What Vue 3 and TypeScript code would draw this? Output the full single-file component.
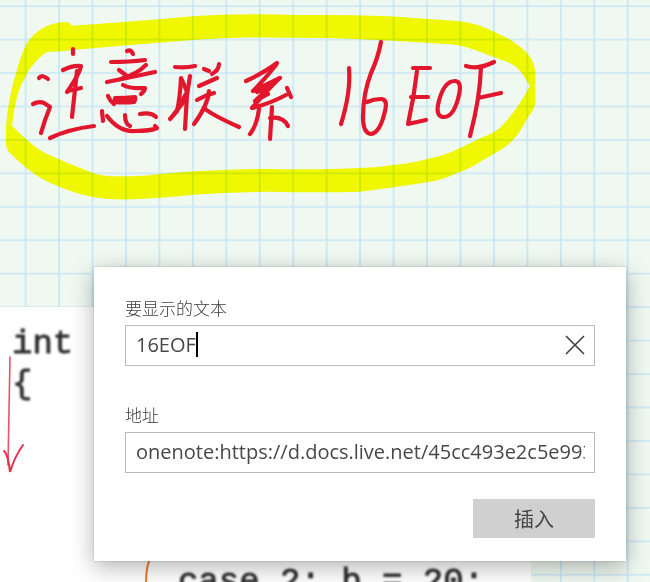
<script setup lang="ts">
import { ref } from 'vue'

const displayText = ref('16EOF')
const address = ref('onenote:https://d.docs.live.net/45cc493e2c5e993')

const openingCode = 'int\n{'
const caseCode = 'case 2: b = 20:'

// Pen strokes of the handwritten heading, grouped by character
const strokes: Record<string, string[]> = {
  zhu: [
    'M39 78Q42 74 48 79',
    'M33 104Q39 101 44 103Q47 105 50 107Q45 119 41 133',
    'M73 49V54',
    'M63 70Q73 65 81 66Q80 73 67 92',
    'M68 91L81 88',
    'M77 71L72 117',
    'M50 138Q69 129 94 126'
  ],
  yi: [
    'M127 51Q131 49 133 54',
    'M111 62Q130 62 145 60',
    'M119 70L127 76',
    'M146 65Q137 74 121 79',
    'M107 82Q132 77 155 72',
    'M123 85Q130 89 145 88Q145 91 141 94',
    'M108 96Q110 101 114 104',
    'M102 111L103 121',
    'M107 116Q119 132 135 131Q151 131 157 128L155 126',
    'M125 115Q125 124 130 126',
    'M140 114Q151 112 156 117'
  ],
  lian: [
    'M175 67Q186 68 195 66',
    'M181 78Q180 98 177 111L170 119',
    'M190 76L187 95L185 129',
    'M182 80L187 92L182 101L186 99L174 114',
    'M204 69L209 71',
    'M219 64Q219 70 212 74',
    'M199 86L217 78',
    'M197 100Q206 95 214 93',
    'M209 91Q208 105 194 124',
    'M204 108Q212 115 239 127'
  ],
  xi: [
    'M277 63Q265 72 246 81',
    'M276 65Q265 79 253 91L280 78Q273 84 252 108Q269 104 286 95',
    'M257 92L271 86L255 101L268 94',
    'M287 88L291 97',
    'M259 109Q257 125 250 134',
    'M272 107L270 139',
    'M270 118Q283 116 288 126'
  ],
  one: ['M349 68Q351 92 341 124'],
  six: ['M381 42Q378 58 371 73Q363 94 363 117Q363 133 371 134Q380 133 385 111Q388 99 381 99Q374 99 367 102'],
  bigE: ['M413 68H430', 'M417 71Q414 98 408 124L426 120', 'M411 97H428'],
  bigO: ['M455 81Q443 81 438 105Q436 117 444 117Q453 117 458 99Q463 81 455 81'],
  bigF: ['M466 66Q478 70 494 62', 'M481 67Q480 98 470 136', 'M478 98L501 93']
}
</script>

<template>
  <main class="note">
    <svg class="ink" aria-hidden="true">
      <defs>
        <pattern id="squares" x="8.9" y="6.1" width="33.45" height="33.45" patternUnits="userSpaceOnUse">
          <path class="rule" d="M16.7 0V33.45M0 0H33.45M0 33.45H33.45" />
        </pattern>
      </defs>
      <rect width="100%" height="100%" fill="url(#squares)" />
      <path
        class="highlighter"
        fill-rule="evenodd"
        d="M71 25.7Q130 22 193 16.3Q235 12.8 300 15Q360 14.5 397 16.7L460 21.3Q476 23 494 31.7Q509 38 520 46.7Q535 58 535.3 73V103Q535 109 528 117Q519 135 510 143Q502 150 483 160Q470 169 457 173Q443 180 427 182.3Q393 188 360 191.7Q320 193 270 191.7Q230 192 193 194.7Q165 198 133 199.3Q108 200 93 197Q77 194 60 187Q44 181 33 173Q22 165 10 153Q6 149 6 144V127Q7 112 10 97Q13 82 17 70Q20 57 27 43Q34 33 43 28Q52 23 63 22Q71 21.5 71 25.7ZM47 52Q58 52 70 50.3L127 45.3L193 40Q230 37 260 37.5L327 38Q360 39 393 40.7L450 44.3Q463 45 483 53L510 63Q519 68 523 75L530 86L523 98Q516 110 503 125Q495 133 483 137L460 148Q444 156 427 159Q413 163 393 165Q377 168 360 168Q320 170 270 169Q235 169 200 171Q180 172 160 174Q147 176 133 176.3H110Q101 176 93 173L70 164L47 154Q37 149 27 140L12 126Q13 112 17 97Q20 86 25 78Q28 70 33 65Q40 56 47 52Z"
      />
      <g class="pen">
        <g v-for="(paths, name) in strokes" :key="name">
          <path v-for="d in paths" :key="d" :d="d" />
        </g>
        <path class="pen-fill" d="M115 98Q126 98 135 97Q136 99 134 102Q124 103 115 102Z" />
      </g>
    </svg>

    <section class="clip">
      <pre class="code">{{ openingCode }}</pre>
      <pre class="code inner">{{ caseCode }}</pre>
      <svg class="marks" aria-hidden="true">
        <path class="arrow" d="M10 50Q9 110 8 158" />
        <path class="arrow-head" d="M4 144Q8 147 10 165Q15 149 23 138" />
        <path class="curve" d="M152 248Q145 258 146 284" />
      </svg>
    </section>

    <form class="dialog" @submit.prevent>
      <div class="field">
        <label for="display-text">要显示的文本</label>
        <div class="box">
          <input id="display-text" v-model="displayText" type="text" autocomplete="off" />
          <span class="caret"></span>
          <button class="clear" type="button" aria-label="清除" @click="displayText = ''">
            <svg viewBox="0 0 20 20" width="20" height="20"><path d="M1 1L19 19M19 1L1 19" /></svg>
          </button>
        </div>
      </div>
      <div class="field">
        <label for="address">地址</label>
        <div class="box">
          <input id="address" v-model="address" type="text" autocomplete="off" spellcheck="false" />
        </div>
      </div>
      <button class="insert" type="submit">插入</button>
    </form>
  </main>
</template>

<style>
body {
  margin: 0;
}
</style>

<style scoped>
.note {
  position: relative;
  box-sizing: border-box;
  min-height: 100vh;
  overflow: hidden;
  background: #eff8f1;
  font-family: 'Open Sans', 'Noto Sans CJK SC', sans-serif;
}

.ink {
  position: absolute;
  inset: 0;
  width: 100%;
  height: 100%;
}

.rule {
  fill: none;
  stroke: #c8e6f5;
  stroke-width: 1.6;
}

.highlighter {
  fill: #ffff00;
  mix-blend-mode: multiply;
}

.pen {
  fill: none;
  stroke: #e2172d;
  stroke-width: 4.2;
  stroke-linecap: round;
  stroke-linejoin: round;
}

.pen-fill {
  fill: #e2172d;
}

.clip {
  position: absolute;
  top: 307px;
  bottom: 0;
  left: 0;
  box-sizing: border-box;
  width: 531px;
  padding: 17px 0 0 12px;
  overflow: hidden;
  background: #ffffff;
}

.code {
  margin: 0;
  color: #2b2b2b;
  font-family: 'Liberation Mono', monospace;
  font-size: 34px;
  line-height: 40px;
  filter: blur(0.8px);
  -webkit-text-stroke: 0.8px #2b2b2b;
}

.inner {
  padding: 158px 0 0 166px;
}

.marks {
  position: absolute;
  inset: 0;
  width: 100%;
  height: 100%;
  fill: none;
  stroke-linecap: round;
}

.arrow {
  stroke: #ea5068;
  stroke-width: 1.6;
}

.arrow-head {
  stroke: #e5304a;
  stroke-width: 2;
}

.curve {
  stroke: #ec7a30;
  stroke-width: 2;
}

.dialog {
  position: absolute;
  top: 267px;
  right: 24px;
  left: 94px;
  box-sizing: border-box;
  display: flex;
  flex-direction: column;
  padding: 29px 31px 23px;
  background: #ffffff;
  box-shadow: 0 0 2px rgba(0, 0, 0, 0.2), 0 6px 22px rgba(0, 0, 0, 0.3);
}

.field {
  display: flex;
  flex-direction: column;
  gap: 5px;
}

.field + .field {
  margin-top: 37px;
}

label {
  color: #3c3c3c;
  font-family: 'Noto Sans CJK SC', sans-serif;
  font-size: 17px;
  font-weight: 300;
  line-height: 24px;
}

.box {
  position: relative;
  display: flex;
  box-sizing: border-box;
  height: 41px;
  padding: 0 9px 2px 10px;
  border: 1px solid #bababa;
}

input {
  flex: 1;
  min-width: 0;
  padding: 0;
  border: 0;
  outline: 0;
  background: transparent;
  color: #484848;
  font: inherit;
  font-size: 20px;
}

.caret {
  position: absolute;
  top: 6px;
  left: 70px;
  width: 2px;
  height: 25px;
  background: #000000;
}

.clear {
  display: flex;
  align-items: center;
  padding: 0;
  border: 0;
  background: transparent;
}

.clear path {
  fill: none;
  stroke: #404040;
  stroke-width: 1.6;
}

.insert {
  align-self: flex-end;
  width: 122px;
  height: 39px;
  margin-top: 26px;
  padding: 0;
  border: 0;
  background: #d0d0d0;
  color: #444444;
  font-family: 'Noto Sans CJK SC', sans-serif;
  font-size: 20px;
}
</style>
